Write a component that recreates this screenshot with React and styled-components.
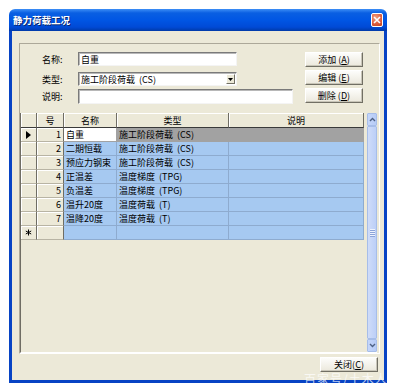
import React from 'react';
import styled, { createGlobalStyle } from 'styled-components';

const Global = createGlobalStyle`
  html, body { margin: 0; padding: 0; background: #fff; }
  body { font-family: "Noto Sans CJK SC", "Liberation Sans", sans-serif; font-size: 9px; color: #000; }
  * { box-sizing: border-box; }
`;

const Page = styled.div`
  position: relative;
  width: 396px;
  height: 392px;
  padding: 9px 0 0 9px;
  overflow: hidden;
`;

const Window = styled.div`
  width: 378px;
  height: 374px;
  display: flex;
  flex-direction: column;
`;

const TitleBar = styled.div`
  height: 22px;
  flex: none;
  border-radius: 6px 6px 0 0;
  background: linear-gradient(#3d8ef6 0%, #0a5fe2 18%, #0056e4 50%, #004ad6 82%, #003aa8 100%);
  display: flex;
  align-items: center;
  padding: 0 4px 0 4px;
`;

const Title = styled.span`
  flex: 1;
  color: #fff;
  font-weight: bold;
  font-size: 9.5px;
  text-shadow: 1px 1px 0 #0a246a;
`;

const CloseBtn = styled.div`
  width: 12px;
  height: 14px;
  border: 1px solid #fff;
  border-radius: 2px;
  background: radial-gradient(circle at 35% 30%, #f0a080 0%, #e06040 55%, #c0401c 100%);
  display: flex;
  align-items: center;
  justify-content: center;
`;

const Body = styled.div`
  flex: 1;
  display: flex;
  flex-direction: column;
  background: #ece9d8;
  border: 3px solid #0743c4;
  border-top: none;
  padding: 12px 4px 0 7px;
`;

const Group = styled.div`
  height: 311px;
  display: flex;
  flex-direction: column;
  border: 1px solid;
  border-color: #aca899 #fff #fff #aca899;
`;

const FormArea = styled.div`
  height: 69px;
  flex: none;
  display: flex;
  padding: 8px 16px 0 22px;
`;

const Fields = styled.div`
  display: flex;
  flex-direction: column;
`;

const FieldRow = styled.div`
  display: flex;
  align-items: center;
  margin-top: ${p => p.$mt || 0}px;
`;

const Label = styled.span`
  width: 36px;
  font-size: 9px;
`;

const TextBox = styled.div`
  width: ${p => p.$w}px;
  height: ${p => p.$h || 14}px;
  background: #fff;
  border: 1px solid;
  border-color: #7a7a7a #f4f4f4 #f4f4f4 #7a7a7a;
  box-shadow: inset 1px 1px 0 #b8b8b8;
  display: flex;
  align-items: center;
  padding-left: 2px;
  white-space: pre;
`;

const SelectArrow = styled.div`
  margin-left: auto;
  margin-right: 1px;
  width: 9px;
  height: 10px;
  background: #ece9d8;
  border: 1px solid;
  border-color: #fff #716f64 #716f64 #fff;
  display: flex;
  align-items: center;
  justify-content: center;
`;

const Buttons = styled.div`
  margin-left: auto;
  display: flex;
  flex-direction: column;
  gap: 3px;
`;

const Button = styled.div`
  width: 58px;
  height: 15px;
  display: flex;
  align-items: center;
  justify-content: center;
  background: linear-gradient(#fdfdfb, #ebe8dc);
  border: 1px solid;
  border-color: #fff #716f64 #716f64 #fff;
  box-shadow: inset -1px -1px 0 #c8c5b8;
  font-size: 9px;
  line-height: 11px;
  white-space: pre;
`;

const Key = styled.span`
  text-decoration: underline;
`;

const GridBox = styled.div`
  flex: 1;
  display: flex;
  margin-right: 2px;
  border-left: 1px solid #6f6d64;
  border-bottom: 1px solid #fff;
`;

const Table = styled.div`
  width: 343px;
  display: flex;
  flex-direction: column;
`;

const Row = styled.div`
  display: grid;
  grid-template-columns: 16px 27px 53px 112px 135px;
  height: ${p => (p.$header ? 15 : 14)}px;
`;

const HeadCell = styled.div`
  background: #ece9d8;
  border-right: 1px solid #6f6d64;
  border-bottom: 1px solid #3a3a3a;
  box-shadow: inset 1px 1px 0 #fff;
  display: flex;
  align-items: center;
  justify-content: center;
  font-size: 9px;
`;

const RowHead = styled.div`
  background: #ece9d8;
  border-right: 1px solid #6f6d64;
  border-bottom: 1px solid #b8b4a4;
  box-shadow: inset 1px 1px 0 #fff;
  display: flex;
  align-items: center;
  justify-content: ${p => (p.$num ? 'flex-end' : 'center')};
  padding-right: ${p => (p.$num ? 2 : 0)}px;
  font-size: 9px;
`;

const Cell = styled.div`
  background: ${p => p.$bg};
  border-right: 1px solid ${p => p.$line};
  border-bottom: 1px solid ${p => p.$line};
  display: flex;
  align-items: center;
  padding-left: 2px;
  white-space: pre;
  overflow: hidden;
  font-size: 9px;
`;

const ScrollBar = styled.div`
  margin-left: 3px;
  width: 11px;
  display: flex;
  flex-direction: column;
  background: #f3f1ea;
`;

const ScrollBtn = styled.div`
  height: 13px;
  flex: none;
  background: linear-gradient(90deg, #c4d6fb, #b6cbf6);
  border: 1px solid #a6bde9;
  border-radius: 1px;
  display: flex;
  align-items: center;
  justify-content: center;
`;

const Thumb = styled.div`
  flex: 1;
  background: linear-gradient(90deg, #cfdcf9, #bccff7);
  border: 1px solid #a6bde9;
  border-radius: 1px;
  display: flex;
  flex-direction: column;
  align-items: center;
  justify-content: center;
  gap: 1px;
`;

const Grip = styled.div`
  width: 5px;
  height: 1px;
  background: #eef3fe;
  box-shadow: 0 1px 0 #8ca4d8;
`;

const Footer = styled.div`
  display: flex;
  justify-content: flex-end;
  padding: 3px 2px 0 0;
`;

const Watermark = styled.div`
  position: absolute;
  left: 304px;
  top: 373px;
  color: rgba(255, 255, 255, 0.72);
  font-size: 12px;
  line-height: 12px;
  letter-spacing: 1px;
  white-space: nowrap;
`;

const rows = [
  ['1', '自重', '施工阶段荷载  (CS)'],
  ['2', '二期恒载', '施工阶段荷载  (CS)'],
  ['3', '预应力钢束', '施工阶段荷载  (CS)'],
  ['4', '正温差', '温度梯度  (TPG)'],
  ['5', '负温差', '温度梯度  (TPG)'],
  ['6', '温升20度', '温度荷载  (T)'],
  ['7', '温降20度', '温度荷载  (T)'],
];

const BLUE = '#a6c9f1';
const BLUE_LINE = '#8eabcf';
const GRAY = '#a2a2a2';

const Chevron = ({ down }) => (
  <svg width="7" height="5" viewBox="0 0 7 5">
    <path d={down ? 'M1 1 L3.5 3.5 L6 1' : 'M1 4 L3.5 1.5 L6 4'} stroke="#4d6185" strokeWidth="1.4" fill="none" />
  </svg>
);

export default function App() {
  return (
    <Page>
      <Global />
      <Window>
        <TitleBar>
          <Title>静力荷载工况</Title>
          <CloseBtn>
            <svg width="8" height="8" viewBox="0 0 8 8">
              <path d="M1 1 L7 7 M7 1 L1 7" stroke="#fff" strokeWidth="1.6" />
            </svg>
          </CloseBtn>
        </TitleBar>
        <Body>
          <Group>
            <FormArea>
              <Fields>
                <FieldRow>
                  <Label>名称:</Label>
                  <TextBox $w={159}>自重</TextBox>
                </FieldRow>
                <FieldRow $mt={6}>
                  <Label>类型:</Label>
                  <TextBox $w={159}>
                    施工阶段荷载  (CS)
                    <SelectArrow>
                      <svg width="5" height="3" viewBox="0 0 5 3">
                        <path d="M0 0 H5 L2.5 3 Z" fill="#000" />
                      </svg>
                    </SelectArrow>
                  </TextBox>
                </FieldRow>
                <FieldRow $mt={3}>
                  <Label>说明:</Label>
                  <TextBox $w={215} $h={15} />
                </FieldRow>
              </Fields>
              <Buttons>
                <Button>添加 (<Key>A</Key>)</Button>
                <Button>编辑 (<Key>E</Key>)</Button>
                <Button>删除 (<Key>D</Key>)</Button>
              </Buttons>
            </FormArea>
            <GridBox>
              <Table>
                <Row $header>
                  <HeadCell />
                  <HeadCell>号</HeadCell>
                  <HeadCell>名称</HeadCell>
                  <HeadCell>类型</HeadCell>
                  <HeadCell>说明</HeadCell>
                </Row>
                {rows.map(([n, name, type], i) => {
                  const sel = i === 0;
                  return (
                    <Row key={n}>
                      <RowHead>
                        {sel && (
                          <svg width="5" height="8" viewBox="0 0 5 8">
                            <path d="M0 0 L5 4 L0 8 Z" fill="#000" />
                          </svg>
                        )}
                      </RowHead>
                      <RowHead $num>{n}</RowHead>
                      <Cell $bg={sel ? '#fff' : BLUE} $line={sel ? GRAY : BLUE_LINE}>{name}</Cell>
                      <Cell $bg={sel ? GRAY : BLUE} $line={sel ? GRAY : BLUE_LINE}>{type}</Cell>
                      <Cell $bg={sel ? GRAY : BLUE} $line={sel ? GRAY : BLUE_LINE} />
                    </Row>
                  );
                })}
                <Row>
                  <RowHead>
                    <svg width="7" height="7" viewBox="0 0 7 7">
                      <path d="M3.5 0.5 V6.5 M0.8 2 L6.2 5 M6.2 2 L0.8 5" stroke="#000" strokeWidth="1" />
                    </svg>
                  </RowHead>
                  <RowHead $num />
                  <Cell $bg={BLUE} $line={BLUE_LINE} />
                  <Cell $bg={BLUE} $line={BLUE_LINE} />
                  <Cell $bg={BLUE} $line={BLUE_LINE} />
                </Row>
              </Table>
              <ScrollBar>
                <ScrollBtn><Chevron /></ScrollBtn>
                <Thumb>
                  <Grip />
                  <Grip />
                  <Grip />
                  <Grip />
                </Thumb>
                <ScrollBtn><Chevron down /></ScrollBtn>
              </ScrollBar>
            </GridBox>
          </Group>
          <Footer>
            <Button>关闭(<Key>C</Key>)</Button>
          </Footer>
        </Body>
      </Window>
      <Watermark>百家号/土木人</Watermark>
    </Page>
  );
}
